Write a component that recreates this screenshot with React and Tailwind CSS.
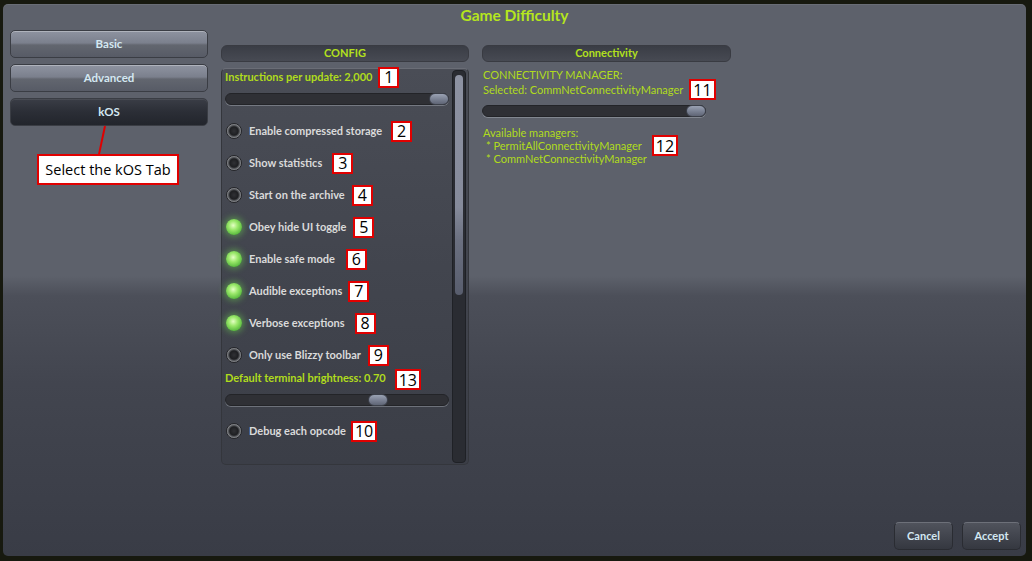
import React from "react";

const F = "font-['Lato',sans-serif]";

function Badge({ n, className = "" }) {
  return (
    <span
      className={`inline-flex shrink-0 items-center justify-center h-[21px] min-w-[21px] px-[2px] bg-white border-2 border-[#e00000] text-black text-[16px] leading-none font-normal font-['Open_Sans',sans-serif] ${className}`}
    >
      {n}
    </span>
  );
}

function Radio({ on }) {
  return on ? (
    <span className="block w-[16px] h-[16px] rounded-full bg-[radial-gradient(circle_at_45%_40%,#e4ffc4_0%,#9ae86a_35%,#56b83c_75%,#35792a_100%)] shadow-[0_0_6px_2px_rgba(110,220,80,0.45)]" />
  ) : (
    <span className="block w-[16px] h-[16px] rounded-full border border-[#25262a] bg-[radial-gradient(circle,#303135_0%,#1e1f22_42%,#5c5e62_58%,#9a9ca0_72%,#4a4b4f_100%)]" />
  );
}

function Slider({ pos }) {
  return (
    <div className="relative h-[12px] w-[224px] rounded-full bg-[#2f3035] border border-[#232428] shadow-[0_1px_0_rgba(200,205,215,0.35)]">
      <div
        className="absolute top-[-1px] h-[12px] w-[20px] rounded-full border border-[#3c404a] bg-[linear-gradient(to_bottom,#9aa2b3_0%,#7b8294_50%,#5f6575_100%)]"
        style={{ left: pos }}
      />
    </div>
  );
}

function Tab({ label, active }) {
  return (
    <div
      className={`h-[28px] rounded-[5px] border border-[#3a3d44] flex items-center justify-center text-[11.5px] font-bold text-[#d4e8f2] ${
        active
          ? "bg-[linear-gradient(to_bottom,#3a3d46_0%,#2b2e36_50%,#22252c_100%)] shadow-[inset_0_1px_0_rgba(255,255,255,0.08)]"
          : "bg-[linear-gradient(to_bottom,#8e93a0_0%,#7b808d_46%,#62666f_54%,#575b66_100%)] shadow-[inset_0_1px_0_rgba(255,255,255,0.3)]"
      }`}
    >
      {label}
    </div>
  );
}

function Header({ label }) {
  return (
    <div className="h-[17px] rounded-[6px] border border-[#393b42] bg-[linear-gradient(to_bottom,#3a3d45_0%,#474a53_100%)] flex items-center justify-center text-[11px] font-bold text-[#b3e01d]">
      {label}
    </div>
  );
}

function RadioRow({ on, label, badge, gap }) {
  return (
    <div className="h-[32px] flex items-center pl-[1px]">
      <Radio on={on} />
      <span className="ml-[7px] text-[11px] font-bold text-[#dadada]">{label}</span>
      <Badge n={badge} className={gap} />
    </div>
  );
}

export default function App() {
  return (
    <div className={`w-[1032px] h-[561px] bg-[#17190f] pt-[4px] pl-[3px] pr-[6px] pb-[5px] ${F}`}>
      <div className="h-full rounded-[5px] flex flex-col bg-[linear-gradient(to_bottom,#5d616b_0px,#5d616b_272px,#4c4f59_292px,#42454f_380px,#393c46_100%)] shadow-[inset_0_1px_0_rgba(255,255,255,0.08)]">
        <div className="h-[26px] flex items-center justify-center text-[15.5px] font-bold text-[#b5e61d] pb-[2px]">
          Game Difficulty
        </div>
        <div className="flex pl-[7px]">
          {/* left tabs */}
          <div className="relative w-[198px] flex flex-col gap-[6px]">
            <Tab label="Basic" />
            <Tab label="Advanced" />
            <Tab label="kOS" active />
            <div className="absolute left-[94px] top-[96px] w-[2px] h-[29px] bg-[#e00000] origin-top rotate-[12deg]" />
            <div className="absolute left-[27px] top-[124px] w-[142px] h-[31px] bg-white border-2 border-[#e00000] flex items-center justify-center text-[14.5px] text-black font-['Open_Sans',sans-serif]">
              Select the kOS Tab
            </div>
          </div>

          {/* config column */}
          <div className="ml-[13px] w-[248px] pt-[15px]">
            <Header label="CONFIG" />
            <div className="mt-[6px] h-[397px] rounded-[5px] border border-[#34363c] border-t-[#6a6d76] bg-[linear-gradient(to_bottom,#4a4d56_0%,#42454e_50%,#3b3e47_100%)] flex">
              <div className="flex-1 pl-[3px]">
                <div className="h-[16px] flex items-center">
                  <span className="text-[11px] font-bold text-[#b0dc1c]">Instructions per update: 2,000</span>
                  <Badge n="1" className="ml-[6px]" />
                </div>
                <div className="mt-[8px]">
                  <Slider pos={203} />
                </div>
                <div className="mt-[10px]">
                  <RadioRow label="Enable compressed storage" badge="2" gap="ml-[9px]" />
                  <RadioRow label="Show statistics" badge="3" gap="ml-[10px]" />
                  <RadioRow label="Start on the archive" badge="4" gap="ml-[7px]" />
                  <RadioRow on label="Obey hide UI toggle" badge="5" gap="ml-[7px]" />
                  <RadioRow on label="Enable safe mode" badge="6" gap="ml-[11px]" />
                  <RadioRow on label="Audible exceptions" badge="7" gap="ml-[6px]" />
                  <RadioRow on label="Verbose exceptions" badge="8" gap="ml-[10px]" />
                  <RadioRow label="Only use Blizzy toolbar" badge="9" gap="ml-[7px]" />
                </div>
                <div className="h-[14px] flex items-center">
                  <span className="text-[11px] font-bold text-[#b0dc1c]">Default terminal brightness: 0.70</span>
                  <Badge n="13" className="ml-[9px] mt-[3px]" />
                </div>
                <div className="mt-[9px]">
                  <Slider pos={142} />
                </div>
                <div className="mt-[9px]">
                  <RadioRow label="Debug each opcode" badge="10" gap="ml-[5px]" />
                </div>
              </div>
              <div className="w-[14px] mr-[2px] my-[1px] rounded-[4px] border border-[#1f2126] bg-[#2a2c32] p-[2px] pt-[4px]">
                <div className="h-[220px] rounded-full bg-[linear-gradient(to_bottom,#8d92a2_0%,#858a9a_60%,#6b7080_75%,#585d6d_100%)]" />
              </div>
            </div>
          </div>

          {/* connectivity column */}
          <div className="ml-[13px] w-[249px] pt-[15px]">
            <Header label="Connectivity" />
            <div className="mt-[5px] pl-[1px] text-[11px] text-[#b0dc1c] leading-[15px]">
              <div className="h-[15px]">CONNECTIVITY MANAGER:</div>
              <div className="h-[15px] flex items-center">
                <span>Selected: CommNetConnectivityManager</span>
                <Badge n="11" className="ml-[6px]" />
              </div>
            </div>
            <div className="mt-[8px]">
              <Slider pos={203} />
            </div>
            <div className="mt-[9px] pl-[1px] text-[11px] text-[#b0dc1c] leading-[13px]">
              <div className="h-[13px]">Available managers:</div>
              <div className="h-[13px] flex items-center">
                <span className="pl-[3px]">* PermitAllConnectivityManager</span>
                <Badge n="12" className="ml-[10px]" />
              </div>
              <div className="h-[13px] pl-[3px]">* CommNetConnectivityManager</div>
            </div>
          </div>
        </div>

        <div className="mt-auto flex justify-end gap-[9px] pr-[5px] pb-[6px]">
          {["Cancel", "Accept"].map((l) => (
            <div
              key={l}
              className="w-[59px] h-[28px] rounded-[5px] border border-[#2a2c32] border-t-[#6d7079] bg-[linear-gradient(to_bottom,#50535c_0%,#42454e_50%,#353840_100%)] flex items-center justify-center text-[11px] font-bold text-[#d4e8f2]"
            >
              {l}
            </div>
          ))}
        </div>
      </div>
    </div>
  );
}
